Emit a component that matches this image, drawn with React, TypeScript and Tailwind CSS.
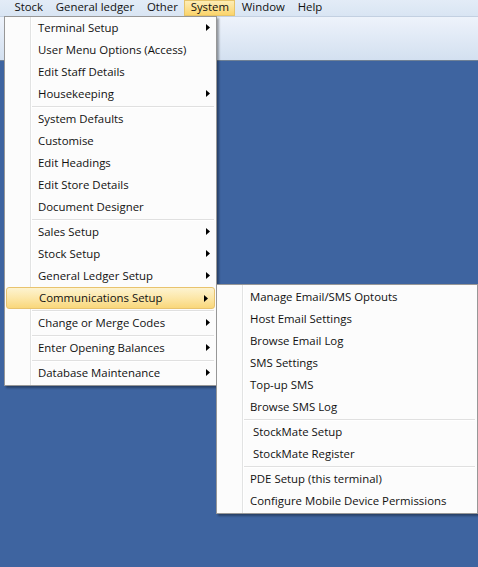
type Item = { label: string; sub?: boolean; active?: boolean; indent?: boolean } | "sep";

const mainMenu: Item[] = [
  { label: "Terminal Setup", sub: true },
  { label: "User Menu Options (Access)" },
  { label: "Edit Staff Details" },
  { label: "Housekeeping", sub: true },
  "sep",
  { label: "System Defaults" },
  { label: "Customise" },
  { label: "Edit Headings" },
  { label: "Edit Store Details" },
  { label: "Document Designer" },
  "sep",
  { label: "Sales Setup", sub: true },
  { label: "Stock Setup", sub: true },
  { label: "General Ledger Setup", sub: true },
  { label: "Communications Setup", sub: true, active: true },
  "sep",
  { label: "Change or Merge Codes", sub: true },
  "sep",
  { label: "Enter Opening Balances", sub: true },
  "sep",
  { label: "Database Maintenance", sub: true },
];

const commsMenu: Item[] = [
  { label: "Manage Email/SMS Optouts" },
  { label: "Host Email Settings" },
  { label: "Browse Email Log" },
  { label: "SMS Settings" },
  { label: "Top-up SMS" },
  { label: "Browse SMS Log" },
  "sep",
  { label: "StockMate Setup", indent: true },
  { label: "StockMate Register", indent: true },
  "sep",
  { label: "PDE Setup (this terminal)" },
  { label: "Configure Mobile Device Permissions" },
];

const Arrow = () => (
  <svg width="4" height="7" viewBox="0 0 4 7" className="absolute right-[6px] top-[7px]">
    <path d="M0 0 L4 3.5 L0 7 Z" fill="#000" />
  </svg>
);

const Menu = ({ items, className }: { items: Item[]; className: string }) => (
  <div className={`absolute bg-[#fcfcfc] border border-[#979797] pb-[1px] shadow-[2px_2px_2px_rgba(0,0,0,0.35)] ${className}`}>
    <div className="absolute left-[25px] top-0 bottom-0 w-[2px] border-l border-[#e2e3e3] bg-white" />
    {items.map((it, i) =>
      it === "sep" ? (
        <div key={i} className="h-[3px] flex items-center pl-[27px] pr-[2px] relative">
          <div className="h-[2px] w-full border-t border-[#e0e0e0] bg-white" />
        </div>
      ) : (
        <div
          key={i}
          className={`relative h-[22px] flex items-center ${it.indent ? "pl-[36px]" : "pl-[33px]"} ${
            it.active
              ? "mx-[1px] !pl-[32px] rounded-[3px] border border-[#e8c36e] bg-gradient-to-b from-[#fdf3d0] via-[#fce7a8] to-[#f9d77a]"
              : ""
          }`}
        >
          <span>{it.label}</span>
          {it.sub && <Arrow />}
        </div>
      )
    )}
  </div>
);

export default function App() {
  const bar = ["Stock", "General ledger", "Other", "System", "Window", "Help"];
  return (
    <div className="relative w-[478px] h-[567px] overflow-hidden bg-[#3e64a0] text-[11.4px] text-[#111] font-['Segoe_UI','Open_Sans',sans-serif] leading-none">
      <div className="h-[17px] flex items-stretch pl-[8px] bg-gradient-to-b from-[#e3ecf7] to-[#d9e5f3] border-b border-[#c3d0e1]">
        {bar.map((b) => (
          <div
            key={b}
            className={`flex items-center pb-[2px] px-[6.4px] ${
              b === "System" ? "bg-gradient-to-b from-[#fdedb5] to-[#fbd46a] border border-[#e6c46a] !px-[5.4px]" : ""
            }`}
          >
            {b}
          </div>
        ))}
      </div>
      <div className="h-[44px] bg-gradient-to-b from-[#eef3fb] to-[#d3e0f0] border-b border-[#6f8196]" />
      <Menu items={mainMenu} className="left-[4px] top-[16px] w-[213px]" />
      <Menu items={commsMenu} className="left-[216px] top-[284px] w-[262px] pt-[1px]" />
    </div>
  );
}
